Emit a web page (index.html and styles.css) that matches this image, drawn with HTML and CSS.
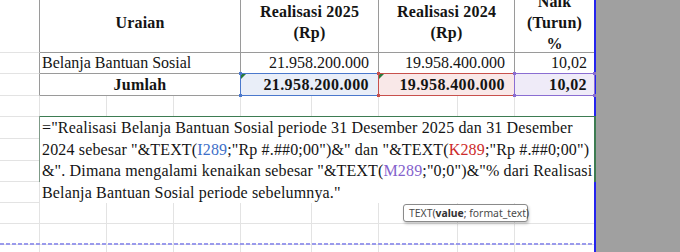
FILE: index.html
```html
<!DOCTYPE html>
<html>
<head>
<meta charset="utf-8">
<link rel="stylesheet" href="styles.css">
</head>
<body>
<div class="screen">
  <div class="sheet">
    <div class="c edge"></div>
    <div class="c t hd span3">Uraian</div>
    <div class="c t hd span2">Realisasi 2025<br>(Rp)</div>
    <div class="c t hd span2">Realisasi 2024<br>(Rp)</div>
    <div class="c t hd last">Naik<br>(Turun)<br>%</div>

    <div class="c edge"></div>
    <div class="c t span3 left">Belanja Bantuan Sosial</div>
    <div class="c t span2 num">21.958.200.000</div>
    <div class="c t span2 num">19.958.400.000</div>
    <div class="c t num last">10,02</div>

    <div class="c edge"></div>
    <div class="c t span3 hd tot">Jumlah</div>
    <div class="c t span2 num b ref ref-blue"><i class="tri"></i>21.958.200.000</div>
    <div class="c t span2 num b ref ref-red"><i class="tri"></i>19.958.400.000</div>
    <div class="c t num b last ref ref-purple">10,02</div>

    <div class="c"></div><div class="c"></div><div class="c"></div><div class="c"></div><div class="c"></div><div class="c"></div><div class="c"></div><div class="c"></div><div class="c last"></div>
    <div class="c"></div><div class="c"></div><div class="c"></div><div class="c"></div><div class="c"></div><div class="c"></div><div class="c"></div><div class="c"></div><div class="c last"></div>
    <div class="c"></div><div class="c"></div><div class="c"></div><div class="c"></div><div class="c"></div><div class="c"></div><div class="c"></div><div class="c"></div><div class="c last"></div>
    <div class="c"></div><div class="c"></div><div class="c"></div><div class="c"></div><div class="c"></div><div class="c"></div><div class="c"></div><div class="c"></div><div class="c last"></div>
    <div class="c"></div><div class="c"></div><div class="c"></div><div class="c"></div><div class="c"></div><div class="c"></div><div class="c"></div><div class="c"></div><div class="c last"></div>
    <div class="c"></div><div class="c"></div><div class="c"></div><div class="c"></div><div class="c"></div><div class="c"></div><div class="c"></div><div class="c"></div><div class="c last"></div>
    <div class="c"></div><div class="c"></div><div class="c"></div><div class="c"></div><div class="c"></div><div class="c"></div><div class="c"></div><div class="c"></div><div class="c last"></div>
    <div class="c"></div><div class="c"></div><div class="c"></div><div class="c"></div><div class="c"></div><div class="c"></div><div class="c"></div><div class="c"></div><div class="c last"></div>

    <div class="editor">
      <div class="ln">="Realisasi Belanja Bantuan Sosial periode 31 Desember 2025 dan 31 Desember</div>
      <div class="ln">2024 sebesar "&amp;TEXT(<span class="r-blue">I289</span>;"Rp #.##0;00")&amp;" dan "&amp;TEXT(<span class="r-red">K289</span>;"Rp #.##0;00")</div>
      <div class="ln">&amp;". Dimana mengalami kenaikan sebesar "&amp;TEXT(<span class="r-purple">M289</span>;"0;0")&amp;"% dari Realisasi</div>
      <div class="ln">Belanja Bantuan Sosial periode sebelumnya."</div>
    </div>

    <div class="tip">TEXT(<b>value</b>; format_text)</div>

    <div class="pagebreak"></div>
  </div>
  <div class="outside"></div>
</div>
</body>
</html>
```
FILE: styles.css
```css
* { box-sizing: border-box; }

body {
  margin: 0;
  width: 680px;
  height: 252px;
  overflow: hidden;
  background: #fff;
  font-family: "Liberation Serif", "Times New Roman", serif;
  color: #141414;
}

.screen {
  display: flex;
  align-items: flex-start;
  height: 252px;
  overflow: hidden;
}

.sheet {
  position: relative;
  flex: none;
  width: 596px;
  margin-top: -8px;
  display: grid;
  grid-template-columns: 40px 67px 67px 67px 71px 67px 79px 57px 79px;
  grid-template-rows: 61px 21px 22px 21px 22px 22px 21px 21px 21px 21px 21px;
  border-right: 2px solid #2424ee;
  font-size: 16px;
}

.outside {
  flex: 1;
  align-self: stretch;
  background: #a0a0a0;
}

.c {
  position: relative;
  display: flex;
  align-items: center;
  min-width: 0;
  white-space: nowrap;
  border-right: 1px solid #e3e3e3;
  border-bottom: 1px solid #e3e3e3;
}

.last { border-right: none; }

.edge { border-right-color: #9a9a9a; }

.t {
  border-right-color: #9a9a9a;
  border-bottom-color: #9a9a9a;
}
.t.last { border-right: none; }

.span3 { grid-column: span 3; }
.span2 { grid-column: span 2; }

.hd {
  justify-content: center;
  text-align: center;
  font-weight: bold;
  line-height: 21px;
  letter-spacing: 0.2px;
}

.left {
  padding-left: 2px;
  line-height: 20px;
}

.num {
  justify-content: flex-end;
  padding-right: 9px;
}
.num.last { padding-right: 7px; }

.b {
  font-weight: bold;
  letter-spacing: 0.4px;
}

/* formula reference highlights */
.ref-blue { --rc: #4a78cc; background: #e9eef8; }
.ref-red { --rc: #c8504c; background: #f9e8e8; }
.ref-purple { --rc: #8a6dd2; background: #efebf8; }

.ref::after {
  content: "";
  position: absolute;
  left: -1px;
  top: -1px;
  right: -1px;
  bottom: -1px;
  border: 1px solid var(--rc);
}

.ref::before {
  content: "";
  position: absolute;
  left: -2px;
  top: -2px;
  right: -2px;
  bottom: -2px;
  z-index: 1;
  background:
    linear-gradient(var(--rc), var(--rc)) left top / 3px 3px no-repeat,
    linear-gradient(var(--rc), var(--rc)) right top / 3px 3px no-repeat,
    linear-gradient(var(--rc), var(--rc)) left bottom / 3px 3px no-repeat,
    linear-gradient(var(--rc), var(--rc)) right bottom / 3px 3px no-repeat;
}

.tri {
  position: absolute;
  left: 0;
  top: 0;
  width: 0;
  height: 0;
  border-top: 5px solid #2a7a3c;
  border-right: 5px solid transparent;
}

/* in-cell editor overlay */
.editor {
  position: absolute;
  left: 40px;
  top: 124px;
  width: 554px;
  height: 87px;
  background: #fff;
  border-top: 1px solid #3d7c52;
  padding-left: 2px;
  font-size: 16px;
  line-height: 21.6px;
  letter-spacing: 0.15px;
  white-space: nowrap;
  color: #141414;
  z-index: 2;
}

.editor::before {
  content: "";
  position: absolute;
  left: -1px;
  top: -1px;
  width: 1px;
  height: 66px;
  background: #7f9a88;
}

.editor::after {
  content: "";
  position: absolute;
  right: -2px;
  top: -1px;
  width: 2px;
  height: 66px;
  background: #3d7c52;
}

.r-blue { color: #3e6fc8; }
.r-red { color: #cc2b2b; }
.r-purple { color: #8462cc; }

.tip {
  position: absolute;
  left: 403px;
  top: 212px;
  width: 125px;
  height: 18px;
  display: flex;
  align-items: center;
  padding: 0 0 0 5px;
  border: 1px solid #8a8a8a;
  border-radius: 3px;
  background: #fff;
  box-shadow: 1px 2px 3px rgba(0, 0, 0, 0.22);
  font-family: "Noto Sans", "Liberation Sans", sans-serif;
  font-size: 10.4px;
  color: #4a4a4a;
  white-space: nowrap;
  z-index: 3;
}
.tip b { color: #333; }

.pagebreak {
  position: absolute;
  left: 0;
  top: 251px;
  width: 594px;
  height: 2px;
  background: repeating-linear-gradient(90deg, #9a9aec 0 4px, transparent 4px 6px);
  z-index: 2;
}
```
